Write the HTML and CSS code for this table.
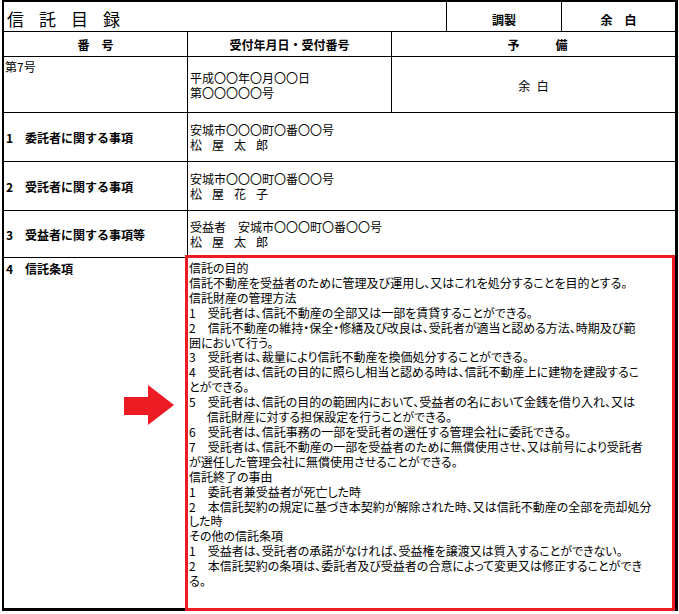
FILE: index.html
```html
<!DOCTYPE html>
<html lang="ja">
<head>
<meta charset="utf-8">
<title>信託目録</title>
<link rel="stylesheet" href="styles.css">
</head>
<body>
<div class="ledger">
  <div class="cell title span3">信託目録</div>
  <div class="cell head hd-top">調製</div>
  <div class="cell head hd-top last">余　白</div>

  <div class="cell head">番　号</div>
  <div class="cell head">受付年月日・受付番号</div>
  <div class="cell head span3 last yobi">予　　　備</div>

  <div class="cell top">第7号</div>
  <div class="cell">
    <div>平成〇〇年〇月〇〇日</div>
    <div>第〇〇〇〇〇号</div>
  </div>
  <div class="cell span3 last blank">余 白</div>

  <div class="cell label">1　委託者に関する事項</div>
  <div class="cell span4 last">
    <div>安城市〇〇〇町〇番〇〇号</div>
    <div class="name">松屋太郎</div>
  </div>

  <div class="cell label">2　受託者に関する事項</div>
  <div class="cell span4 last">
    <div>安城市〇〇〇町〇番〇〇号</div>
    <div class="name">松屋花子</div>
  </div>

  <div class="cell label">3　受益者に関する事項等</div>
  <div class="cell span4 last">
    <div>受益者　安城市〇〇〇町〇番〇〇号</div>
    <div class="name">松屋太郎</div>
  </div>

  <div class="cell label top4 final">
    <div>4　信託条項</div>
    <svg class="arrow" width="50" height="40" viewBox="0 0 50 40" aria-hidden="true">
      <rect x="0" y="12" width="25" height="18" fill="#ed1c24"/>
      <polygon points="24,0 50,20 24,40" fill="#ed1c24"/>
    </svg>
  </div>
  <div class="cell span4 last final clauses">
    <div class="lines">
      <div>信託の目的</div>
      <div>信託不動産を受益者のために管理及び運用し、又はこれを処分することを目的とする。</div>
      <div>信託財産の管理方法</div>
      <div>1　受託者は、信託不動産の全部又は一部を賃貸することができる。</div>
      <div>2　信託不動産の維持・保全・修繕及び改良は、受託者が適当と認める方法、時期及び範</div>
      <div>囲において行う。</div>
      <div>3　受託者は、裁量により信託不動産を換価処分することができる。</div>
      <div>4　受託者は、信託の目的に照らし相当と認める時は、信託不動産上に建物を建設するこ</div>
      <div>とができる。</div>
      <div>5　受託者は、信託の目的の範囲内において、受益者の名において金銭を借り入れ、又は</div>
      <div class="cont">信託財産に対する担保設定を行うことができる。</div>
      <div>6　受託者は、信託事務の一部を受託者の選任する管理会社に委託できる。</div>
      <div>7　受託者は、信託不動産の一部を受益者のために無償使用させ、又は前号により受託者</div>
      <div>が選任した管理会社に無償使用させることができる。</div>
      <div>信託終了の事由</div>
      <div>1　委託者兼受益者が死亡した時</div>
      <div>2　本信託契約の規定に基づき本契約が解除された時、又は信託不動産の全部を売却処分</div>
      <div>した時</div>
      <div>その他の信託条項</div>
      <div>1　受益者は、受託者の承諾がなければ、受益権を譲渡又は質入することができない。</div>
      <div>2　本信託契約の条項は、委託者及び受益者の合意によって変更又は修正することができ</div>
      <div>る。</div>
    </div>
  </div>
</div>
</body>
</html>
```

FILE: styles.css
```css
* { box-sizing: border-box; }
html, body { margin: 0; padding: 0; background: #fff; }
body {
  font-family: "Noto Sans CJK JP", "Noto Sans", sans-serif;
  font-size: 12px;
  line-height: 15px;
  color: #000;
}
.ledger {
  display: grid;
  grid-template-columns: 184px 204px 55px 115px 113px;
  grid-template-rows: 30px 25px 56px 49px 49px 47px 350px;
  width: max-content;
  margin-left: 2px;
  border-style: solid;
  border-color: #000;
  border-width: 2px 3px 3px 2px;
}
.cell {
  border-right: 1px solid #000;
  border-bottom: 1px solid #000;
  display: flex;
  flex-direction: column;
  justify-content: center;
  padding: 0 2px;
  min-width: 0;
  white-space: nowrap;
}
.last { border-right: 0; }
.final { border-bottom: 0; }
.span3 { grid-column: span 3; }
.span4 { grid-column: span 4; }

.title {
  font-size: 17px;
  line-height: 20px;
  letter-spacing: 15px;
  padding: 4px 0 0 3px;
}
.head { font-weight: 700; align-items: center; }
.hd-top { padding-top: 5px; }
.yobi { padding-left: 10px; }
.top { justify-content: flex-start; padding-top: 2px; padding-left: 1px; }
.blank { align-items: center; word-spacing: 4px; padding-top: 2px; }
.label { font-weight: 700; }
.name { letter-spacing: 10px; }
.top4 {
  justify-content: flex-start;
  padding-top: 3px;
  position: relative;
}
.arrow { position: absolute; left: 120px; top: 127px; }
.clauses {
  justify-content: flex-start;
  position: relative;
  padding: 3px 0 0 1px;
}
.clauses::after {
  content: "";
  position: absolute;
  top: -3px;
  left: -3px;
  right: 0;
  bottom: -3px;
  border: 3px solid #ed1c24;
  pointer-events: none;
}
.lines {
  line-height: 14.9px;
  font-feature-settings: "palt" 1;
}
.cont { padding-left: 18px; }
```
